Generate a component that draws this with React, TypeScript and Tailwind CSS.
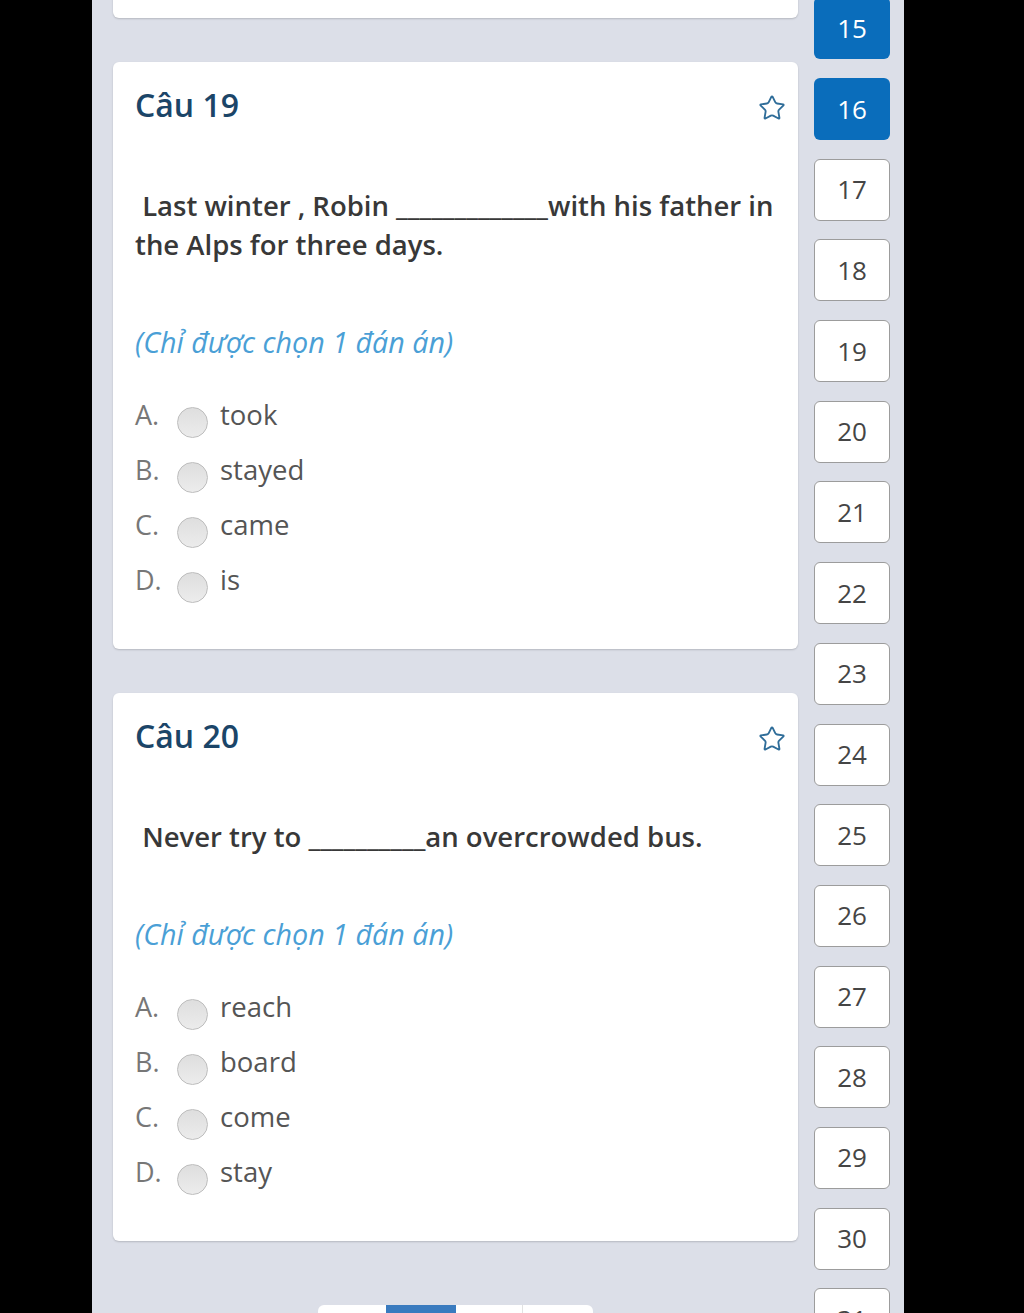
import { Star } from "lucide-react";

type Question = {
  no: number;
  text: string[];
  options: string[];
};

const questions: Question[] = [
  {
    no: 19,
    text: ["\u00a0Last winter , Robin _____________with his father in", "the Alps for three days."],
    options: ["took", "stayed", "came", "is"],
  },
  {
    no: 20,
    text: ["\u00a0Never try to __________an overcrowded bus."],
    options: ["reach", "board", "come", "stay"],
  },
];

const letters = ["A.", "B.", "C.", "D."];

function QuestionCard({ q }: { q: Question }) {
  return (
    <div className="shrink-0 rounded-[6px] bg-white pl-[22px] pr-[12px] pt-[23px] pb-[32px] shadow-[0_1px_2px_rgba(0,0,0,0.18)]">
      <div className="flex items-center justify-between">
        <h2 className="text-[32px] leading-[40px] font-semibold text-[#1b4568]">Câu {q.no}</h2>
        <Star size={28} strokeWidth={1.6} className="mt-[6px] text-[#2f6d99]" />
      </div>
      <p className="mt-[61px] text-[27.5px] leading-[39px] font-semibold text-[#383838]">
        {q.text.map((line, i) => (
          <span key={i} className="block whitespace-nowrap">
            {line}
          </span>
        ))}
      </p>
      <p className="mt-[60px] text-[28.7px] leading-[36px] italic text-[#4a9fd6]">(Chỉ được chọn 1 đán án)</p>
      <div className="mt-[37px] flex flex-col">
        {q.options.map((opt, i) => (
          <div key={i} className="flex h-[55px] items-start">
            <span className="w-[42px] text-[27px] leading-[36px] text-[#777]">{letters[i]}</span>
            <span className="mt-[10px] h-[31px] w-[31px] rounded-full border border-[#bdbdbd] bg-gradient-to-b from-[#dedede] to-[#ececec]" />
            <span className="ml-[12px] text-[27.5px] leading-[36px] text-[#555]">{opt}</span>
          </div>
        ))}
      </div>
    </div>
  );
}

function NumButton({ n, active }: { n: number; active?: boolean }) {
  return (
    <div
      className={
        active
          ? "flex h-[62px] w-[76px] shrink-0 items-center justify-center rounded-[6px] bg-[#0a6dbb] text-[26px] text-white"
          : "flex h-[62px] w-[76px] shrink-0 items-center justify-center rounded-[6px] border border-[#9c9c9c] bg-white text-[26px] text-[#454545]"
      }
    >
      {n}
    </div>
  );
}

export default function App() {
  const nums = Array.from({ length: 17 }, (_, i) => 15 + i);
  return (
    <div
      className="flex h-[1313px] w-[1024px] overflow-hidden bg-black"
      style={{ fontFamily: '"Open Sans", "Noto Sans", sans-serif' }}
    >
      <div className="w-[92px] shrink-0" />
      <div className="flex w-[812px] shrink-0 bg-[#dcdfe8]">
        <div className="ml-[21px] flex w-[685px] shrink-0 flex-col gap-[44px]">
          <div className="-mt-[26px] h-[44px] shrink-0 rounded-[6px] bg-white shadow-[0_1px_2px_rgba(0,0,0,0.18)]" />
          {questions.map((q) => (
            <QuestionCard key={q.no} q={q} />
          ))}
          <div className="mt-[20px] flex h-[44px] shrink-0 self-center overflow-hidden rounded-[6px]">
            <div className="w-[68px] bg-white" />
            <div className="w-[70px] bg-[#3a7bbf]" />
            <div className="w-[67px] border-r border-[#e2e2e2] bg-white" />
            <div className="w-[70px] bg-white" />
          </div>
        </div>
        <div className="ml-[16px] flex w-[76px] shrink-0 flex-col gap-[18.7px] -mt-[2.7px]">
          {nums.map((n) => (
            <NumButton key={n} n={n} active={n === 15 || n === 16} />
          ))}
        </div>
      </div>
    </div>
  );
}
